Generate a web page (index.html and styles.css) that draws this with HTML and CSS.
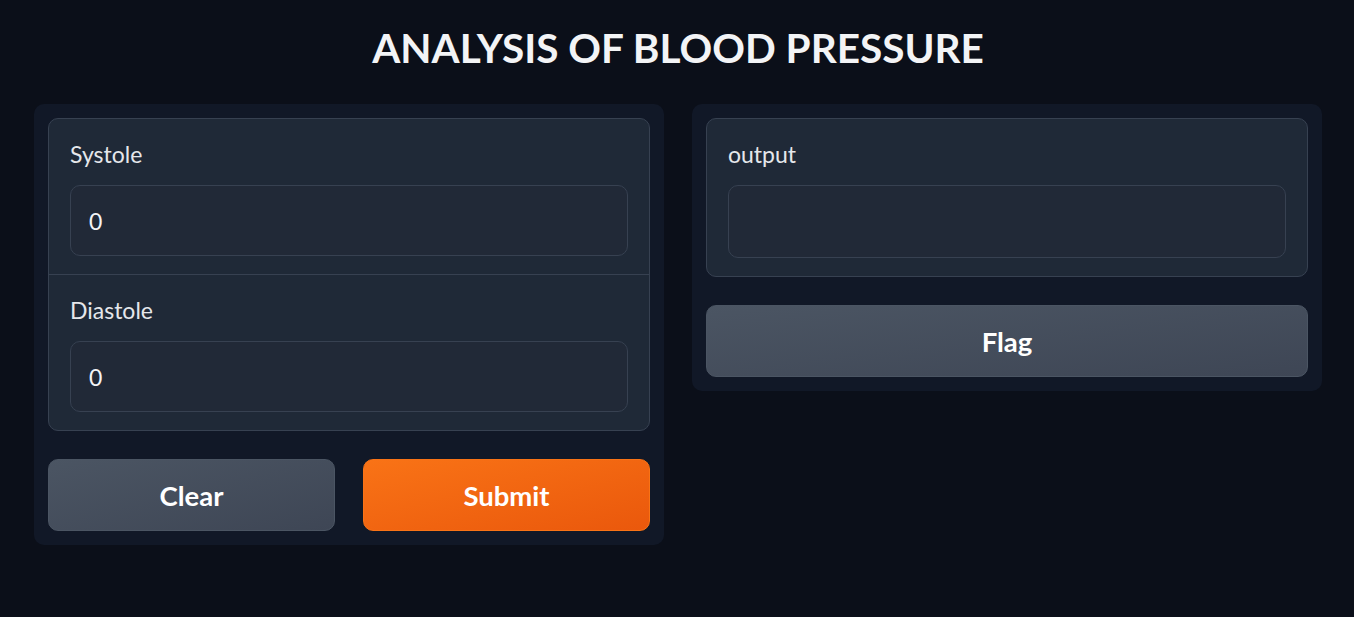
FILE: index.html
```html
<!DOCTYPE html>
<html lang="en">
<head>
<meta charset="utf-8">
<title>Analysis of Blood Pressure</title>
<link rel="stylesheet" href="styles.css">
</head>
<body>
<main class="app">
  <h1 class="title">ANALYSIS OF BLOOD PRESSURE</h1>
  <div class="row">
    <section class="panel">
      <div class="form">
        <div class="field">
          <label class="label" for="sys">Systole</label>
          <input class="input" id="sys" type="text" value="0">
        </div>
        <div class="field field-sep">
          <label class="label" for="dia">Diastole</label>
          <input class="input" id="dia" type="text" value="0">
        </div>
      </div>
      <div class="actions">
        <button class="btn btn-secondary">Clear</button>
        <button class="btn btn-primary">Submit</button>
      </div>
    </section>
    <section class="panel">
      <div class="form">
        <div class="field">
          <label class="label" for="out">output</label>
          <textarea class="input output" id="out" rows="1"></textarea>
        </div>
      </div>
      <div class="actions">
        <button class="btn btn-secondary">Flag</button>
      </div>
    </section>
  </div>
</main>
</body>
</html>
```
FILE: styles.css
```css
* { box-sizing: border-box; }
html, body {
  margin: 0;
  background: #0b0f19;
  color: #f3f4f6;
  font-family: "Lato", "Noto Sans", sans-serif;
}
.app {
  padding: 24px 32px 0 34px;
}
.title {
  margin: 0 0 32px;
  text-align: center;
  font-size: 40.5px;
  font-weight: 700;
  line-height: 48px;
  color: #f3f4f6;
}
.row {
  display: flex;
  gap: 28px;
  align-items: flex-start;
}
.panel {
  flex: 1;
  background: #111827;
  border-radius: 10px;
  padding: 14px;
  display: flex;
  flex-direction: column;
  gap: 28px;
}
.form {
  background: #1f2937;
  border: 1px solid #374151;
  border-radius: 10px;
  overflow: hidden;
}
.field {
  padding: 17px 21px 18px;
  display: flex;
  flex-direction: column;
  gap: 13px;
}
.field-sep {
  border-top: 1px solid #374151;
}
.label {
  font-size: 23px;
  line-height: 36px;
  color: #e5e7eb;
}
.input {
  height: 71px;
  width: 100%;
  background: #212937;
  border: 1px solid #374151;
  border-radius: 10px;
  color: #f3f4f6;
  font-family: inherit;
  font-size: 23px;
  padding: 0 18px;
  outline: none;
}
.output {
  height: 73px;
  resize: none;
}
.actions {
  display: flex;
  gap: 28px;
}
.btn {
  flex: 1;
  height: 72px;
  border-radius: 10px;
  font-family: inherit;
  font-size: 27.5px;
  font-weight: 700;
  color: #ffffff;
  cursor: pointer;
}
.btn-secondary {
  background: linear-gradient(to bottom right, #4b5563, #3e4655);
  border: 1px solid #4b5563;
}
.btn-primary {
  background: linear-gradient(to bottom right, #f97316, #ea580c);
  border: 1px solid #f97316;
}
```
